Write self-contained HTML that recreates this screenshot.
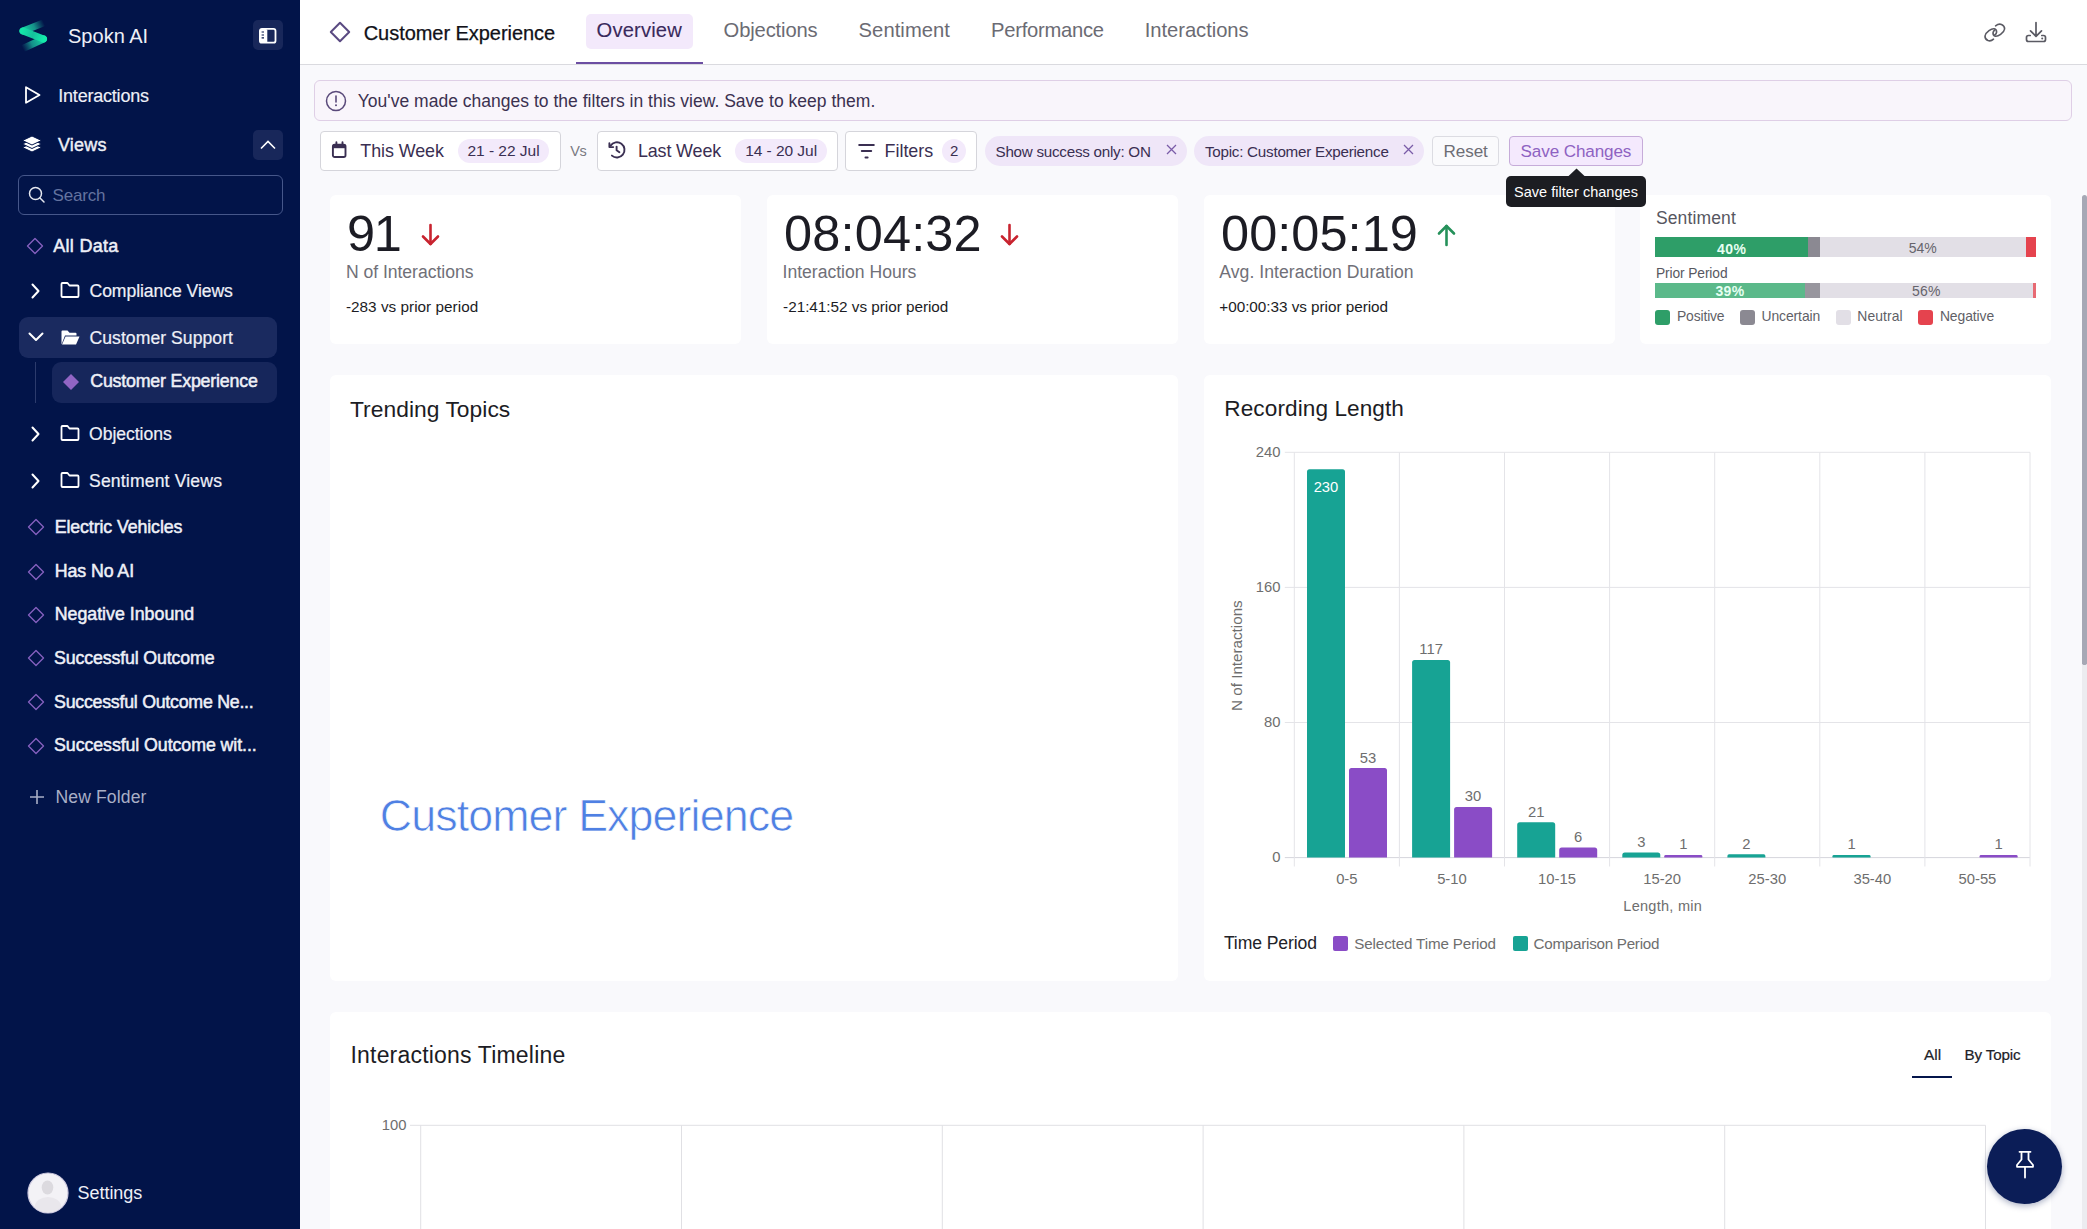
<!DOCTYPE html>
<html><head><meta charset="utf-8">
<style>
*{box-sizing:border-box;margin:0;padding:0}
html,body{width:2087px;height:1229px;overflow:hidden;background:#F9F9FC;font-family:"Liberation Sans",sans-serif;position:relative}
.abs{position:absolute}
.t{position:absolute;white-space:nowrap;line-height:1}
#sb{position:absolute;left:0;top:0;width:300px;height:1229px;background:#021449;overflow:hidden}
svg{position:absolute;overflow:visible}
</style></head><body>
<div id="sb">
<svg style="left:14px;top:18px;" width="40" height="36" viewBox="0 0 40 36">
<defs>
<linearGradient id="lg1" gradientUnits="userSpaceOnUse" x1="29" y1="3" x2="8" y2="13"><stop offset="0" stop-color="#1AA595" stop-opacity="0"/><stop offset="0.45" stop-color="#1BB39A" stop-opacity="0.8"/><stop offset="1" stop-color="#16E3A6"/></linearGradient>
<linearGradient id="lg2" gradientUnits="userSpaceOnUse" x1="8" y1="13" x2="29.5" y2="21"><stop offset="0" stop-color="#14E6A8"/><stop offset="0.5" stop-color="#15BF9C"/><stop offset="1" stop-color="#14EAAA"/></linearGradient>
<linearGradient id="lg3" gradientUnits="userSpaceOnUse" x1="29.5" y1="21" x2="9" y2="31"><stop offset="0" stop-color="#16D9A4"/><stop offset="0.55" stop-color="#17A595" stop-opacity="0.85"/><stop offset="1" stop-color="#1A8A90" stop-opacity="0"/></linearGradient>
</defs>
<path d="M28 5.5 L9 13" stroke="url(#lg1)" stroke-width="7" stroke-linecap="round" fill="none"/>
<path d="M29.5 21 L10 30" stroke="url(#lg3)" stroke-width="7" stroke-linecap="round" fill="none"/>
<path d="M9 13 L29.5 21" stroke="url(#lg2)" stroke-width="7" stroke-linecap="round" fill="none"/>
</svg>
<div class="t " style="left:68.0px;top:25.97px;font-size:20px;color:#EEF0F7;font-weight:400;letter-spacing:0.014px;">Spokn AI</div>
<div class="abs" style="left:253px;top:20px;width:30px;height:30px;background:#18275A;border-radius:5px"></div>
<svg style="left:259px;top:27px;" width="18" height="17" viewBox="0 0 18 17"><rect x="0.9" y="1.9" width="15.6" height="13.8" rx="2" fill="none" stroke="#fff" stroke-width="1.8"/>
<rect x="0.9" y="1.9" width="7.4" height="13.8" rx="1.5" fill="#fff"/>
<path d="M2.6 5 H5 M2.6 8 H5 M2.6 10.9 H5" stroke="#03154A" stroke-width="1.1"/></svg>
<svg style="left:24px;top:85px;" width="18" height="20" viewBox="0 0 18 20"><path d="M2 2.2 L15.5 10 L2 17.8 Z" fill="none" stroke="#fff" stroke-width="1.8" stroke-linejoin="round"/></svg>
<div class="t " style="left:58.28px;top:86.56px;font-size:18px;color:#EEF0F7;font-weight:400;letter-spacing:-0.210px;-webkit-text-stroke:0.15px #EEF0F7;">Interactions</div>
<svg style="left:22px;top:134px;" width="20" height="20" viewBox="0 0 20 20"><path d="M10 9 L18.5 13 Q19 13.5 18.5 14 L10 18 L1.5 14 Q1 13.5 1.5 13 Z" fill="#fff" stroke="#03154A" stroke-width="1"/>
<path d="M10 5.5 L18.5 9.5 Q19 10 18.5 10.5 L10 14.5 L1.5 10.5 Q1 10 1.5 9.5 Z" fill="#fff" stroke="#03154A" stroke-width="1"/>
<path d="M10 2 L18.5 6 Q19 6.5 18.5 7 L10 11 L1.5 7 Q1 6.5 1.5 6 Z" fill="#fff" stroke="#03154A" stroke-width="1"/></svg>
<div class="t " style="left:57.9px;top:136.46px;font-size:18px;color:#EEF0F7;font-weight:400;letter-spacing:0.200px;-webkit-text-stroke:0.4px #EEF0F7;">Views</div>
<div class="abs" style="left:253px;top:130px;width:30px;height:30px;background:#18275A;border-radius:5px"></div>
<svg style="left:259px;top:138px;" width="18" height="14" viewBox="0 0 18 14"><path d="M2 10.5 L9 3.5 L16 10.5" fill="none" stroke="#fff" stroke-width="1.6"/></svg>
<div class="abs" style="left:18px;top:175px;width:265px;height:40px;background:transparent;border:1.5px solid #46578A;border-radius:6px"></div>
<svg style="left:28px;top:186px;" width="18" height="18" viewBox="0 0 18 18"><circle cx="7.5" cy="7.5" r="6" fill="none" stroke="#E6E8F0" stroke-width="1.5"/><line x1="12" y1="12" x2="16" y2="16" stroke="#E6E8F0" stroke-width="1.5" stroke-linecap="round"/></svg>
<div class="t " style="left:52.5px;top:187.31px;font-size:17px;color:#64739F;font-weight:400;letter-spacing:-0.158px;">Search</div>
<svg style="left:25px;top:235.5px;" width="20" height="20" viewBox="0 0 20 20"><path d="M10 2.5 L17.5 10 L10 17.5 L2.5 10 Z" fill="none" stroke="#8460BE" stroke-width="1.4" stroke-linejoin="round"/></svg>
<div class="t " style="left:53.25px;top:237.46px;font-size:18px;color:#EEF0F7;font-weight:400;letter-spacing:0.301px;-webkit-text-stroke:0.5px #EEF0F7;">All Data</div>
<svg style="left:28px;top:282px;" width="16" height="18" viewBox="0 0 16 18"><path d="M4.5 2.5 L10.5 9 L4.5 15.5" fill="none" stroke="#fff" stroke-width="2" stroke-linecap="round" stroke-linejoin="round"/></svg>
<svg style="left:60px;top:281px;" width="20" height="18" viewBox="0 0 20 18"><path d="M1.5 3 Q1.5 2 2.5 2 L7.5 2 L9.5 4.5 L17.5 4.5 Q18.5 4.5 18.5 5.5 L18.5 15 Q18.5 16 17.5 16 L2.5 16 Q1.5 16 1.5 15 Z" fill="none" stroke="#fff" stroke-width="1.8" stroke-linejoin="round"/></svg>
<div class="t " style="left:89.5px;top:282.80px;font-size:17.6px;color:#EEF0F7;font-weight:400;letter-spacing:-0.066px;-webkit-text-stroke:0.2px #EEF0F7;">Compliance Views</div>
<div class="abs" style="left:19px;top:317px;width:258px;height:41px;background:#1A2A5F;border-radius:9px"></div>
<svg style="left:27px;top:330px;" width="18" height="14" viewBox="0 0 18 14"><path d="M2.5 3.5 L9 10 L15.5 3.5" fill="none" stroke="#fff" stroke-width="2" stroke-linecap="round" stroke-linejoin="round"/></svg>
<svg style="left:60px;top:329px;" width="20" height="17" viewBox="0 0 20 17"><path d="M1.5 2.5 Q1.5 1.5 2.5 1.5 L7.5 1.5 L9.5 3.8 L15.5 3.8 Q16.5 3.8 16.5 4.8 L16.5 6.5 L5 6.5 L1.5 15.5 Z" fill="#fff"/><path d="M5.5 7.5 L19.5 7.5 L16 15.5 L2 15.5 Z" fill="#fff"/></svg>
<div class="t " style="left:89.5px;top:330.00px;font-size:17.6px;color:#EEF0F7;font-weight:400;letter-spacing:0.045px;-webkit-text-stroke:0.2px #EEF0F7;">Customer Support</div>
<div class="abs" style="left:35px;top:362px;width:1px;height:41px;background:#2C3B6C;"></div>
<div class="abs" style="left:52px;top:362px;width:225px;height:41px;background:#16265B;border-radius:9px"></div>
<svg style="left:61px;top:372px;" width="20" height="20" viewBox="0 0 20 20"><path d="M10 2 L18 10 L10 18 L2 10 Z" fill="#9165C4"/></svg>
<div class="t " style="left:90.25px;top:373.33px;font-size:17.8px;color:#EEF0F7;font-weight:400;letter-spacing:-0.192px;-webkit-text-stroke:0.5px #EEF0F7;">Customer Experience</div>
<svg style="left:28px;top:425px;" width="16" height="18" viewBox="0 0 16 18"><path d="M4.5 2.5 L10.5 9 L4.5 15.5" fill="none" stroke="#fff" stroke-width="2" stroke-linecap="round" stroke-linejoin="round"/></svg>
<svg style="left:60px;top:424px;" width="20" height="18" viewBox="0 0 20 18"><path d="M1.5 3 Q1.5 2 2.5 2 L7.5 2 L9.5 4.5 L17.5 4.5 Q18.5 4.5 18.5 5.5 L18.5 15 Q18.5 16 17.5 16 L2.5 16 Q1.5 16 1.5 15 Z" fill="none" stroke="#fff" stroke-width="1.8" stroke-linejoin="round"/></svg>
<div class="t " style="left:89.0px;top:425.60px;font-size:17.6px;color:#EEF0F7;font-weight:400;letter-spacing:-0.040px;-webkit-text-stroke:0.2px #EEF0F7;">Objections</div>
<svg style="left:28px;top:472px;" width="16" height="18" viewBox="0 0 16 18"><path d="M4.5 2.5 L10.5 9 L4.5 15.5" fill="none" stroke="#fff" stroke-width="2" stroke-linecap="round" stroke-linejoin="round"/></svg>
<svg style="left:60px;top:471px;" width="20" height="18" viewBox="0 0 20 18"><path d="M1.5 3 Q1.5 2 2.5 2 L7.5 2 L9.5 4.5 L17.5 4.5 Q18.5 4.5 18.5 5.5 L18.5 15 Q18.5 16 17.5 16 L2.5 16 Q1.5 16 1.5 15 Z" fill="none" stroke="#fff" stroke-width="1.8" stroke-linejoin="round"/></svg>
<div class="t " style="left:89.0px;top:473.20px;font-size:17.6px;color:#EEF0F7;font-weight:400;letter-spacing:0.159px;-webkit-text-stroke:0.2px #EEF0F7;">Sentiment Views</div>
<svg style="left:26px;top:517.2px;" width="20" height="20" viewBox="0 0 20 20"><path d="M10 2.5 L17.5 10 L10 17.5 L2.5 10 Z" fill="none" stroke="#8460BE" stroke-width="1.4" stroke-linejoin="round"/></svg>
<div class="t " style="left:54.65px;top:518.63px;font-size:17.8px;color:#EEF0F7;font-weight:400;letter-spacing:-0.105px;-webkit-text-stroke:0.5px #EEF0F7;">Electric Vehicles</div>
<svg style="left:26px;top:561.5px;" width="20" height="20" viewBox="0 0 20 20"><path d="M10 2.5 L17.5 10 L10 17.5 L2.5 10 Z" fill="none" stroke="#8460BE" stroke-width="1.4" stroke-linejoin="round"/></svg>
<div class="t " style="left:54.65px;top:562.93px;font-size:17.8px;color:#EEF0F7;font-weight:400;letter-spacing:-0.075px;-webkit-text-stroke:0.5px #EEF0F7;">Has No AI</div>
<svg style="left:26px;top:605.0px;" width="20" height="20" viewBox="0 0 20 20"><path d="M10 2.5 L17.5 10 L10 17.5 L2.5 10 Z" fill="none" stroke="#8460BE" stroke-width="1.4" stroke-linejoin="round"/></svg>
<div class="t " style="left:54.65px;top:606.43px;font-size:17.8px;color:#EEF0F7;font-weight:400;letter-spacing:0.003px;-webkit-text-stroke:0.5px #EEF0F7;">Negative Inbound</div>
<svg style="left:26px;top:648.2px;" width="20" height="20" viewBox="0 0 20 20"><path d="M10 2.5 L17.5 10 L10 17.5 L2.5 10 Z" fill="none" stroke="#8460BE" stroke-width="1.4" stroke-linejoin="round"/></svg>
<div class="t " style="left:54.05px;top:649.63px;font-size:17.8px;color:#EEF0F7;font-weight:400;letter-spacing:-0.149px;-webkit-text-stroke:0.5px #EEF0F7;">Successful Outcome</div>
<svg style="left:26px;top:692.2px;" width="20" height="20" viewBox="0 0 20 20"><path d="M10 2.5 L17.5 10 L10 17.5 L2.5 10 Z" fill="none" stroke="#8460BE" stroke-width="1.4" stroke-linejoin="round"/></svg>
<div class="t " style="left:54.05px;top:693.63px;font-size:17.8px;color:#EEF0F7;font-weight:400;letter-spacing:-0.255px;-webkit-text-stroke:0.5px #EEF0F7;">Successful Outcome Ne...</div>
<svg style="left:26px;top:735.7px;" width="20" height="20" viewBox="0 0 20 20"><path d="M10 2.5 L17.5 10 L10 17.5 L2.5 10 Z" fill="none" stroke="#8460BE" stroke-width="1.4" stroke-linejoin="round"/></svg>
<div class="t " style="left:54.05px;top:737.13px;font-size:17.8px;color:#EEF0F7;font-weight:400;letter-spacing:-0.079px;-webkit-text-stroke:0.5px #EEF0F7;">Successful Outcome wit...</div>
<svg style="left:29px;top:789px;" width="16" height="16" viewBox="0 0 16 16"><path d="M8 1 V15 M1 8 H15" stroke="#A9AFC6" stroke-width="1.6"/></svg>
<div class="t " style="left:55.5px;top:788.80px;font-size:17.6px;color:#A9AFC6;font-weight:400;letter-spacing:0.108px;">New Folder</div>
<svg style="left:27px;top:1172px;" width="42" height="42" viewBox="0 0 42 42"><defs><clipPath id="avc"><circle cx="21" cy="21" r="19.5"/></clipPath></defs><circle cx="21" cy="21" r="20" fill="#F3F2F6" stroke="#CFCBE0" stroke-width="1.2"/><g clip-path="url(#avc)"><ellipse cx="20.5" cy="15.5" rx="5.8" ry="7" fill="#DCDADF"/><ellipse cx="21" cy="34" rx="13" ry="9" fill="#E9E7EC"/></g></svg>
<div class="t " style="left:77.6px;top:1184.46px;font-size:18px;color:#EEF0F7;font-weight:400;letter-spacing:-0.053px;">Settings</div>
</div>
<div class="abs" style="left:300px;top:0px;width:1787px;height:65px;background:#fff;border-bottom:1px solid #DADADF"></div>
<svg style="left:329px;top:21px;" width="22" height="22" viewBox="0 0 22 22"><path d="M11 1.8 L20.2 11 L11 20.2 L1.8 11 Z" fill="none" stroke="#5A4A82" stroke-width="2" stroke-linejoin="round"/></svg>
<div class="t " style="left:363.73px;top:22.57px;font-size:20px;color:#111118;font-weight:400;letter-spacing:-0.047px;-webkit-text-stroke:0.25px #111118;">Customer Experience</div>
<div class="abs" style="left:586px;top:14px;width:107px;height:35px;background:#F3E9FB;border-radius:5px"></div>
<div class="t " style="left:596.55px;top:20.30px;font-size:20.2px;color:#3A2A5C;font-weight:400;letter-spacing:0.167px;-webkit-text-stroke:0.1px #3A2A5C;">Overview</div>
<div class="abs" style="left:576px;top:62px;width:127px;height:2.2px;background:#6C4EA2;"></div>
<div class="t " style="left:723.6px;top:20.30px;font-size:20.2px;color:#6B6B73;font-weight:400;letter-spacing:-0.149px;">Objections</div>
<div class="t " style="left:858.6px;top:20.30px;font-size:20.2px;color:#6B6B73;font-weight:400;letter-spacing:0.062px;">Sentiment</div>
<div class="t " style="left:991.0px;top:20.30px;font-size:20.2px;color:#6B6B73;font-weight:400;letter-spacing:-0.255px;">Performance</div>
<div class="t " style="left:1144.7px;top:20.30px;font-size:20.2px;color:#6B6B73;font-weight:400;letter-spacing:-0.039px;">Interactions</div>
<svg style="left:1983px;top:22px;" width="24" height="20" viewBox="0 0 24 20"><g fill="none" stroke="#5A5A63" stroke-width="1.6" stroke-linecap="round">
<path d="M10.5 17.2 Q8 19.5 5 18.6 Q1.8 17.2 2 14 Q2.3 11.3 6 8.6 Q9 6.5 11.2 6.8 Q13.8 7.4 13.6 10.2 Q13.4 12 11.8 13"/>
<path d="M12.6 3.8 Q15.5 1.5 18.5 2.4 Q21.8 3.8 21.6 7 Q21.3 9.7 17.6 12.4 Q14.6 14.5 12.4 14.2 Q9.8 13.6 10 10.8 Q10.2 9 11.8 8"/>
</g></svg>
<svg style="left:2025px;top:21px;" width="22" height="22" viewBox="0 0 22 22"><g fill="none" stroke="#5A5A63" stroke-width="1.7" stroke-linecap="round" stroke-linejoin="round">
<path d="M11 1.5 V15 M5.5 9.8 L11 15.3 L16.5 9.8"/>
<path d="M5.2 14.5 H3.5 Q1.5 14.5 1.5 16.5 V18.5 Q1.5 20.5 3.5 20.5 H18.5 Q20.5 20.5 20.5 18.5 V16.5 Q20.5 14.5 18.5 14.5 H16.8"/>
</g><circle cx="17.2" cy="17.6" r="1" fill="#5A5A63"/></svg>
<div class="abs" style="left:314px;top:80px;width:1758px;height:41px;background:#F9F5FB;border:1px solid #DFCFE6;border-radius:6px"></div>
<svg style="left:325px;top:90px;" width="22" height="22" viewBox="0 0 22 22"><circle cx="11" cy="11" r="9.5" fill="none" stroke="#59497A" stroke-width="1.5"/><path d="M11 6 V12" stroke="#59497A" stroke-width="1.6" stroke-linecap="round"/><circle cx="11" cy="15.3" r="1" fill="#59497A"/></svg>
<div class="t " style="left:357.7px;top:92.79px;font-size:17.5px;color:#3B3150;font-weight:400;letter-spacing:0.019px;">You&#39;ve made changes to the filters in this view. Save to keep them.</div>
<div class="abs" style="left:320px;top:131px;width:241px;height:40px;background:#fff;border:1px solid #D5D5DB;border-radius:4px"></div>
<svg style="left:331px;top:141px;" width="18" height="18" viewBox="0 0 18 18"><rect x="1.9" y="3.6" width="12.6" height="12.4" rx="1.8" fill="none" stroke="#3A2F52" stroke-width="1.9"/><rect x="1.9" y="3.6" width="12.6" height="3.6" fill="#3A2F52"/><path d="M5.4 1.2 V4 M11.5 1.2 V4" stroke="#3A2F52" stroke-width="1.9" stroke-linecap="round"/></svg>
<div class="t " style="left:360.3px;top:142.75px;font-size:17.9px;color:#3A2F52;font-weight:400;letter-spacing:-0.076px;">This Week</div>
<div class="abs" style="left:458px;top:139px;width:91px;height:24px;background:#F3EAFB;border-radius:12px"></div>
<div class="t " style="left:467.4px;top:142.88px;font-size:15.5px;color:#3A2F52;font-weight:400;letter-spacing:-0.019px;">21 - 22 Jul</div>
<div class="t " style="left:570.2px;top:144.33px;font-size:14.5px;color:#7A7A82;font-weight:400;letter-spacing:-0.392px;">Vs</div>
<div class="abs" style="left:597px;top:131px;width:241px;height:40px;background:#fff;border:1px solid #D5D5DB;border-radius:4px"></div>
<svg style="left:606px;top:140px;" width="20" height="20" viewBox="0 0 20 20"><g fill="none" stroke="#3A2F52" stroke-width="1.9" stroke-linecap="round" stroke-linejoin="round"><path d="M5.9 15.6 A7.6 7.6 0 1 0 4.6 5.6"/><path d="M3.4 3.2 V7.1 H7.2"/><path d="M10.6 6.6 V10.3 L13.4 12.3"/></g></svg>
<div class="t " style="left:637.9px;top:142.65px;font-size:17.9px;color:#3A2F52;font-weight:400;letter-spacing:-0.114px;">Last Week</div>
<div class="abs" style="left:735px;top:139px;width:92px;height:24px;background:#F3EAFB;border-radius:12px"></div>
<div class="t " style="left:745.2px;top:142.88px;font-size:15.5px;color:#3A2F52;font-weight:400;letter-spacing:-0.048px;">14 - 20 Jul</div>
<div class="abs" style="left:845px;top:131px;width:132px;height:40px;background:#fff;border:1px solid #D5D5DB;border-radius:4px"></div>
<svg style="left:856px;top:142px;" width="20" height="18" viewBox="0 0 20 18"><path d="M3.2 2.9 H17.8 M5.8 9 H15.2 M9.5 15.4 H11.6" stroke="#3A2F52" stroke-width="2" stroke-linecap="round"/></svg>
<div class="t " style="left:884.6px;top:142.65px;font-size:17.9px;color:#3A2F52;font-weight:400;letter-spacing:-0.031px;">Filters</div>
<div class="abs" style="left:942px;top:139px;width:24px;height:24px;background:#F3EAFB;border-radius:12px"></div>
<div class="t" style="left:654.2px;width:600px;text-align:center;top:142.90px;font-size:15px;color:#3A2F52;font-weight:400;">2</div>
<div class="abs" style="left:985px;top:136px;width:202px;height:30px;background:#EFE6F8;border-radius:15px"></div>
<div class="t " style="left:995.5px;top:144.03px;font-size:15.2px;color:#3A2F52;font-weight:400;letter-spacing:-0.251px;">Show success only: ON</div>
<svg style="left:1166px;top:144px;" width="11" height="11" viewBox="0 0 11 11"><path d="M1 1 L10 10 M10 1 L1 10" stroke="#7A5CA8" stroke-width="1.25"/></svg>
<div class="abs" style="left:1194px;top:136px;width:230px;height:30px;background:#EFE6F8;border-radius:15px"></div>
<div class="t " style="left:1204.9px;top:144.03px;font-size:15.2px;color:#3A2F52;font-weight:400;letter-spacing:-0.239px;">Topic: Customer Experience</div>
<svg style="left:1403px;top:144px;" width="11" height="11" viewBox="0 0 11 11"><path d="M1 1 L10 10 M10 1 L1 10" stroke="#7A5CA8" stroke-width="1.25"/></svg>
<div class="abs" style="left:1432px;top:136px;width:67px;height:30px;background:#FAFAFC;border:1px solid #DCDCE2;border-radius:4px"></div>
<div class="t " style="left:1443.6px;top:143.12px;font-size:17.1px;color:#6D6D75;font-weight:400;letter-spacing:-0.108px;">Reset</div>
<div class="abs" style="left:1509px;top:136px;width:134px;height:30px;background:#F4E9FD;border:1px solid #C6ACD9;border-radius:4px"></div>
<div class="t " style="left:1520.6px;top:143.12px;font-size:17.1px;color:#8E62C2;font-weight:400;letter-spacing:-0.125px;">Save Changes</div>
<div class="abs" style="left:330px;top:195px;width:411px;height:149px;background:#fff;border-radius:6px"></div>
<div class="t " style="left:347.0px;top:208.95px;font-size:50.5px;color:#1C1C24;font-weight:400;letter-spacing:-1.455px;">91</div>
<div class="t " style="left:345.9px;top:263.60px;font-size:17.6px;color:#707078;font-weight:400;letter-spacing:-0.033px;">N of Interactions</div>
<div class="t " style="left:345.9px;top:299.45px;font-size:15.3px;color:#1C1C24;font-weight:400;letter-spacing:0.026px;">-283 vs prior period</div>
<svg style="left:421px;top:223px;" width="20" height="24" viewBox="0 0 20 24"><g fill="none" stroke="#C8232F" stroke-width="2.6" stroke-linecap="round" stroke-linejoin="round"><path d="M9.5 2 V21"/><path d="M2 13.5 L9.5 21 L17 13.5"/></g></svg>
<div class="abs" style="left:767px;top:195px;width:411px;height:149px;background:#fff;border-radius:6px"></div>
<div class="t " style="left:784.0px;top:208.95px;font-size:50.5px;color:#1C1C24;font-weight:400;letter-spacing:0.158px;">08:04:32</div>
<div class="t " style="left:782.5px;top:263.60px;font-size:17.6px;color:#707078;font-weight:400;letter-spacing:-0.008px;">Interaction Hours</div>
<div class="t " style="left:783.1px;top:299.45px;font-size:15.3px;color:#1C1C24;font-weight:400;letter-spacing:-0.023px;">-21:41:52 vs prior period</div>
<svg style="left:1000px;top:223px;" width="20" height="24" viewBox="0 0 20 24"><g fill="none" stroke="#C8232F" stroke-width="2.6" stroke-linecap="round" stroke-linejoin="round"><path d="M9.5 2 V21"/><path d="M2 13.5 L9.5 21 L17 13.5"/></g></svg>
<div class="abs" style="left:1204px;top:195px;width:411px;height:149px;background:#fff;border-radius:6px"></div>
<div class="t " style="left:1221.0px;top:208.95px;font-size:50.5px;color:#1C1C24;font-weight:400;letter-spacing:0.043px;">00:05:19</div>
<div class="t " style="left:1219.3px;top:263.60px;font-size:17.6px;color:#707078;font-weight:400;letter-spacing:0.041px;">Avg. Interaction Duration</div>
<div class="t " style="left:1219.3px;top:299.45px;font-size:15.3px;color:#1C1C24;font-weight:400;letter-spacing:-0.037px;">+00:00:33 vs prior period</div>
<svg style="left:1437px;top:223px;" width="20" height="24" viewBox="0 0 20 24"><g fill="none" stroke="#25915A" stroke-width="2.6" stroke-linecap="round" stroke-linejoin="round"><path d="M9.5 22 V3"/><path d="M2 10.5 L9.5 3 L17 10.5"/></g></svg>
<div class="abs" style="left:1640px;top:195px;width:411px;height:149px;background:#fff;border-radius:6px"></div>
<div class="t " style="left:1655.9px;top:210.39px;font-size:17.5px;color:#57575F;font-weight:400;letter-spacing:0.145px;">Sentiment</div>
<div class="abs" style="left:1655px;top:237px;width:153px;height:20px;background:#2E9E68;"></div>
<div class="abs" style="left:1808px;top:237px;width:12px;height:20px;background:#8B8992;"></div>
<div class="abs" style="left:1820px;top:237px;width:206px;height:20px;background:#E2DFE6;"></div>
<div class="abs" style="left:2026px;top:237px;width:10px;height:20px;background:#E5434E;"></div>
<div class="t " style="left:1716.9px;top:241.55px;font-size:14px;color:#E6FFF2;font-weight:700;letter-spacing:0.500px;">40%</div>
<div class="t " style="left:1908.7px;top:241.45px;font-size:14px;color:#66646C;font-weight:400;letter-spacing:0.050px;">54%</div>
<div class="t " style="left:1655.9px;top:266.52px;font-size:13.8px;color:#57575F;font-weight:400;letter-spacing:-0.106px;">Prior Period</div>
<div class="abs" style="left:1655px;top:283px;width:150px;height:15px;background:#5BB98A;"></div>
<div class="abs" style="left:1805px;top:283px;width:15px;height:15px;background:#98969E;"></div>
<div class="abs" style="left:1820px;top:283px;width:213px;height:15px;background:#E2DFE6;"></div>
<div class="abs" style="left:2033px;top:283px;width:3px;height:15px;background:#E76A73;"></div>
<div class="t " style="left:1715.4px;top:284.35px;font-size:14px;color:#E6FFF2;font-weight:700;letter-spacing:0.350px;">39%</div>
<div class="t " style="left:1912.0px;top:284.35px;font-size:14px;color:#66646C;font-weight:400;letter-spacing:0.200px;">56%</div>
<div class="abs" style="left:1655px;top:310px;width:15px;height:15px;background:#2E9E68;border-radius:3px"></div>
<div class="t " style="left:1677.0px;top:310.33px;font-size:13.9px;color:#5F5F67;font-weight:400;letter-spacing:-0.150px;">Positive</div>
<div class="abs" style="left:1740px;top:310px;width:15px;height:15px;background:#8B8992;border-radius:3px"></div>
<div class="t " style="left:1761.5px;top:310.33px;font-size:13.9px;color:#5F5F67;font-weight:400;letter-spacing:-0.087px;">Uncertain</div>
<div class="abs" style="left:1836px;top:310px;width:15px;height:15px;background:#E2DFE6;border-radius:3px"></div>
<div class="t " style="left:1857.3px;top:310.33px;font-size:13.9px;color:#5F5F67;font-weight:400;letter-spacing:0.079px;">Neutral</div>
<div class="abs" style="left:1918px;top:310px;width:15px;height:15px;background:#E5434E;border-radius:3px"></div>
<div class="t " style="left:1939.9px;top:310.33px;font-size:13.9px;color:#5F5F67;font-weight:400;letter-spacing:-0.077px;">Negative</div>
<div class="abs" style="left:330px;top:375px;width:848px;height:606px;background:#fff;border-radius:6px"></div>
<div class="t " style="left:350.0px;top:397.90px;font-size:22.8px;color:#1C1C24;font-weight:400;letter-spacing:0.042px;">Trending Topics</div>
<div class="t " style="left:379.7px;top:792.68px;font-size:44.8px;color:#4F80E3;font-weight:400;letter-spacing:-0.908px;-webkit-text-stroke:0.7px #fff">Customer Experience</div>
<div class="abs" style="left:1204px;top:375px;width:847px;height:606px;background:#fff;border-radius:6px"></div>
<div class="t " style="left:1224.3px;top:398.37px;font-size:22.6px;color:#1C1C24;font-weight:400;letter-spacing:0.085px;">Recording Length</div>
<svg style="left:1204px;top:375px;" width="847" height="606" viewBox="0 0 847 606"><line x1="80.79999999999995" y1="482.6" x2="826" y2="482.6" stroke="#D6D6DC" stroke-width="1"/><line x1="80.79999999999995" y1="347.5" x2="826" y2="347.5" stroke="#E4E4E8" stroke-width="1"/><line x1="80.79999999999995" y1="212.4" x2="826" y2="212.4" stroke="#E4E4E8" stroke-width="1"/><line x1="80.79999999999995" y1="77.3" x2="826" y2="77.3" stroke="#E4E4E8" stroke-width="1"/><line x1="90.3" y1="77.30000000000001" x2="90.3" y2="491.5" stroke="#E4E4E8" stroke-width="1"/><line x1="195.4" y1="77.30000000000001" x2="195.4" y2="491.5" stroke="#E4E4E8" stroke-width="1"/><line x1="300.5" y1="77.30000000000001" x2="300.5" y2="491.5" stroke="#E4E4E8" stroke-width="1"/><line x1="405.6" y1="77.30000000000001" x2="405.6" y2="491.5" stroke="#E4E4E8" stroke-width="1"/><line x1="510.7" y1="77.30000000000001" x2="510.7" y2="491.5" stroke="#E4E4E8" stroke-width="1"/><line x1="615.8" y1="77.30000000000001" x2="615.8" y2="491.5" stroke="#E4E4E8" stroke-width="1"/><line x1="720.9" y1="77.30000000000001" x2="720.9" y2="491.5" stroke="#E4E4E8" stroke-width="1"/><line x1="826.0" y1="77.30000000000001" x2="826.0" y2="491.5" stroke="#E4E4E8" stroke-width="1"/></svg>
<div class="t" style="right:806.5px;text-align:right;top:850.07px;font-size:14.8px;color:#6E6E6E;font-weight:400;">0</div>
<div class="t" style="right:806.5px;text-align:right;top:714.97px;font-size:14.8px;color:#6E6E6E;font-weight:400;">80</div>
<div class="t" style="right:806.5px;text-align:right;top:579.87px;font-size:14.8px;color:#6E6E6E;font-weight:400;">160</div>
<div class="t" style="right:806.5px;text-align:right;top:444.77px;font-size:14.8px;color:#6E6E6E;font-weight:400;">240</div>
<svg style="left:1204px;top:375px;" width="847" height="606" viewBox="0 0 847 606"><path d="M103.00 482.60 V96.69 Q103.00 94.19 105.50 94.19 H138.50 Q141.00 94.19 141.00 96.69 V482.60 Z" fill="#17A394"/><path d="M145.00 482.60 V395.60 Q145.00 393.10 147.50 393.10 H180.50 Q183.00 393.10 183.00 395.60 V482.60 Z" fill="#8A4CC6"/><path d="M208.10 482.60 V287.52 Q208.10 285.02 210.60 285.02 H243.60 Q246.10 285.02 246.10 287.52 V482.60 Z" fill="#17A394"/><path d="M250.10 482.60 V434.44 Q250.10 431.94 252.60 431.94 H285.60 Q288.10 431.94 288.10 434.44 V482.60 Z" fill="#8A4CC6"/><path d="M313.20 482.60 V449.64 Q313.20 447.14 315.70 447.14 H348.70 Q351.20 447.14 351.20 449.64 V482.60 Z" fill="#17A394"/><path d="M355.20 482.60 V474.97 Q355.20 472.47 357.70 472.47 H390.70 Q393.20 472.47 393.20 474.97 V482.60 Z" fill="#8A4CC6"/><path d="M418.30 482.60 V480.03 Q418.30 477.53 420.80 477.53 H453.80 Q456.30 477.53 456.30 480.03 V482.60 Z" fill="#17A394"/><path d="M460.30 482.60 V481.30 Q460.30 480.00 461.60 480.00 H497.00 Q498.30 480.00 498.30 481.30 V482.60 Z" fill="#8A4CC6"/><path d="M523.40 482.60 V480.91 Q523.40 479.22 525.09 479.22 H559.71 Q561.40 479.22 561.40 480.91 V482.60 Z" fill="#17A394"/><path d="M628.50 482.60 V481.30 Q628.50 480.00 629.80 480.00 H665.20 Q666.50 480.00 666.50 481.30 V482.60 Z" fill="#17A394"/><path d="M775.60 482.60 V481.30 Q775.60 480.00 776.90 480.00 H812.30 Q813.60 480.00 813.60 481.30 V482.60 Z" fill="#8A4CC6"/></svg>
<div class="t" style="left:1026.0px;width:600px;text-align:center;top:480.27px;font-size:14.8px;color:#FFFFFF;font-weight:400;">230</div>
<div class="t" style="left:1068.0px;width:600px;text-align:center;top:750.57px;font-size:14.8px;color:#6E6E6E;font-weight:400;">53</div>
<div class="t" style="left:1046.85px;width:600px;text-align:center;top:872.47px;font-size:14.8px;color:#6E6E6E;font-weight:400;">0-5</div>
<div class="t" style="left:1131.1px;width:600px;text-align:center;top:642.49px;font-size:14.8px;color:#6E6E6E;font-weight:400;">117</div>
<div class="t" style="left:1173.1px;width:600px;text-align:center;top:789.41px;font-size:14.8px;color:#6E6E6E;font-weight:400;">30</div>
<div class="t" style="left:1151.9499999999998px;width:600px;text-align:center;top:872.47px;font-size:14.8px;color:#6E6E6E;font-weight:400;">5-10</div>
<div class="t" style="left:1236.2px;width:600px;text-align:center;top:804.61px;font-size:14.8px;color:#6E6E6E;font-weight:400;">21</div>
<div class="t" style="left:1278.2px;width:600px;text-align:center;top:829.94px;font-size:14.8px;color:#6E6E6E;font-weight:400;">6</div>
<div class="t" style="left:1257.05px;width:600px;text-align:center;top:872.47px;font-size:14.8px;color:#6E6E6E;font-weight:400;">10-15</div>
<div class="t" style="left:1341.3px;width:600px;text-align:center;top:835.01px;font-size:14.8px;color:#6E6E6E;font-weight:400;">3</div>
<div class="t" style="left:1383.3px;width:600px;text-align:center;top:837.47px;font-size:14.8px;color:#6E6E6E;font-weight:400;">1</div>
<div class="t" style="left:1362.1499999999999px;width:600px;text-align:center;top:872.47px;font-size:14.8px;color:#6E6E6E;font-weight:400;">15-20</div>
<div class="t" style="left:1446.3999999999999px;width:600px;text-align:center;top:836.69px;font-size:14.8px;color:#6E6E6E;font-weight:400;">2</div>
<div class="t" style="left:1467.2499999999998px;width:600px;text-align:center;top:872.47px;font-size:14.8px;color:#6E6E6E;font-weight:400;">25-30</div>
<div class="t" style="left:1551.5px;width:600px;text-align:center;top:837.47px;font-size:14.8px;color:#6E6E6E;font-weight:400;">1</div>
<div class="t" style="left:1572.35px;width:600px;text-align:center;top:872.47px;font-size:14.8px;color:#6E6E6E;font-weight:400;">35-40</div>
<div class="t" style="left:1698.6px;width:600px;text-align:center;top:837.47px;font-size:14.8px;color:#6E6E6E;font-weight:400;">1</div>
<div class="t" style="left:1677.4499999999998px;width:600px;text-align:center;top:872.47px;font-size:14.8px;color:#6E6E6E;font-weight:400;">50-55</div>
<div class="t " style="left:1623.35px;top:899.03px;font-size:14.5px;color:#6E6E6E;font-weight:400;letter-spacing:0.274px;">Length, min</div>
<div class="t" style="left:1137px;top:647.5px;width:200px;text-align:center;font-size:15.2px;color:#6E6E6E;transform:rotate(-90deg)">N of Interactions</div>
<div class="t " style="left:1223.9px;top:934.70px;font-size:17.6px;color:#222228;font-weight:400;letter-spacing:-0.115px;">Time Period</div>
<div class="abs" style="left:1333px;top:935.5px;width:15px;height:15px;background:#8A4CC6;border-radius:2px"></div>
<div class="t " style="left:1354.3px;top:936.23px;font-size:15.2px;color:#6E6E6E;font-weight:400;letter-spacing:-0.136px;">Selected Time Period</div>
<div class="abs" style="left:1512.5px;top:935.5px;width:15px;height:15px;background:#17A394;border-radius:2px"></div>
<div class="t " style="left:1533.6px;top:936.23px;font-size:15.2px;color:#6E6E6E;font-weight:400;letter-spacing:-0.263px;">Comparison Period</div>
<div class="abs" style="left:330px;top:1012px;width:1721px;height:260px;background:#fff;border-radius:6px"></div>
<div class="t " style="left:350.5px;top:1043.73px;font-size:23px;color:#1C1C24;font-weight:400;letter-spacing:0.189px;">Interactions Timeline</div>
<div class="t " style="left:1924.1px;top:1046.56px;font-size:15.4px;color:#222228;font-weight:400;letter-spacing:-0.047px;-webkit-text-stroke:0.2px #222228;">All</div>
<div class="t " style="left:1964.6px;top:1046.73px;font-size:15.2px;color:#222228;font-weight:400;letter-spacing:-0.150px;-webkit-text-stroke:0.2px #222228;">By Topic</div>
<div class="abs" style="left:1912px;top:1076px;width:40px;height:2px;background:#04154B;"></div>
<svg style="left:330px;top:1012px;" width="1721" height="260" viewBox="0 0 1721 260"><line x1="80" y1="113.29999999999995" x2="1655.5" y2="113.29999999999995" stroke="#E0E0E4"/><line x1="90.7" y1="113.29999999999995" x2="90.7" y2="260" stroke="#E0E0E4"/><line x1="351.5" y1="113.29999999999995" x2="351.5" y2="260" stroke="#E0E0E4"/><line x1="612.3" y1="113.29999999999995" x2="612.3" y2="260" stroke="#E0E0E4"/><line x1="873.1" y1="113.29999999999995" x2="873.1" y2="260" stroke="#E0E0E4"/><line x1="1133.9" y1="113.29999999999995" x2="1133.9" y2="260" stroke="#E0E0E4"/><line x1="1394.7" y1="113.29999999999995" x2="1394.7" y2="260" stroke="#E0E0E4"/><line x1="1655.5" y1="113.29999999999995" x2="1655.5" y2="260" stroke="#E0E0E4"/></svg>
<div class="t" style="right:1680.5px;text-align:right;top:1118.47px;font-size:14.8px;color:#6E6E6E;font-weight:400;">100</div>
<div class="abs" style="left:2082px;top:665px;width:5px;height:564px;background:#ECECF0;"></div>
<div class="abs" style="left:2082px;top:195px;width:5px;height:470px;background:#A6A8B5;border-radius:3px 3px 2px 2px"></div>
<div class="abs" style="left:1987px;top:1129px;width:75px;height:75px;background:#0B1D57;border-radius:50%;box-shadow:0 2px 6px rgba(11,29,87,0.35)"></div>
<svg style="left:2014px;top:1150px;" width="22" height="30" viewBox="0 0 22 30"><g fill="none" stroke="#fff" stroke-width="1.8" stroke-linejoin="round" stroke-linecap="round"><path d="M5.5 1.8 H16.5"/><path d="M7.5 1.8 V9.5 L3 15 V16.8 H19 V15 L14.5 9.5 V1.8"/><path d="M11 16.8 V27.5"/></g></svg>
<div class="abs" style="left:1506px;top:176px;width:140px;height:31px;background:#1C1D22;border-radius:5px"></div>
<svg style="left:1568px;top:168px;" width="17" height="9" viewBox="0 0 17 9"><path d="M0 8.5 L8.5 0.5 L17 8.5 Z" fill="#1C1D22"/></svg>
<div class="t " style="left:1514.0px;top:185.23px;font-size:14.5px;color:#FFFFFF;font-weight:400;letter-spacing:0.032px;">Save filter changes</div>

</body></html>
